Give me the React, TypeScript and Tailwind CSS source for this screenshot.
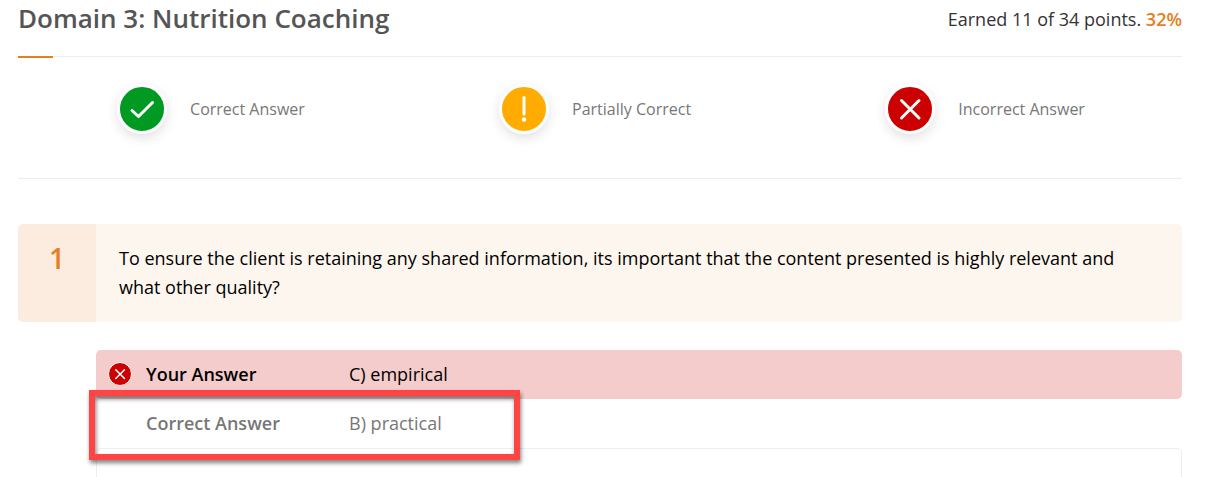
import React from "react";

type Status = "correct" | "partial" | "incorrect";

interface StatusIconProps {
  status: Status;
  small?: boolean;
}

const colors = {
  correct: "bg-[#009a22]",
  partial: "bg-[#ffab00]",
  incorrect: "bg-[#cc0000]",
};

const StatusIcon = ({ status, small }: StatusIconProps) => (
  <span
    className={`block shrink-0 rounded-full border-white ${colors[status]} ${
      small
        ? "size-6 border"
        : "size-[50px] border-3 shadow-[0_4px_12px_rgba(0,0,0,0.12)]"
    }`}
  >
    <svg
      viewBox="0 0 44 44"
      fill="none"
      stroke="white"
      strokeWidth={3}
      strokeLinecap="round"
      strokeLinejoin="round"
      className="size-full"
      aria-hidden="true"
    >
      {status === "correct" && <path d="M12 23.5l6.500 6L32.500 15.500" />}
      {status === "partial" && (
        <>
          <path d="M22 10.500V27" />
          <circle cx="22" cy="32.500" r="2.200" fill="white" stroke="none" />
        </>
      )}
      {status === "incorrect" && (
        <path d="M13.500 13.500l17.500 17.500M31 13.500L13.500 31" />
      )}
    </svg>
  </span>
);

const legend: { status: Status; label: string }[] = [
  { status: "correct", label: "Correct Answer" },
  { status: "partial", label: "Partially Correct" },
  { status: "incorrect", label: "Incorrect Answer" },
];

const App = () => {
  return (
    <main className="pl-[18px] pr-[42px] bg-white font-['Open_Sans','Noto_Sans',sans-serif] text-lg text-black">
      <header className="flex items-start justify-between h-[57px] border-b border-[#eeeeee]">
        <div className="flex flex-col">
          <h1 className="text-[26px] leading-9 font-semibold text-[#555555]">
            Domain 3: Nutrition Coaching
          </h1>
          <span className="mt-5 w-[35px] h-0.5 shrink-0 bg-[#e67e22]" />
        </div>
        <p className="leading-[38px] text-[#333333]">
          Earned 11 of 34 points.{" "}
          <span className="font-semibold text-[#e67e22]">32%</span>
        </p>
      </header>

      <ul className="flex justify-around pt-[27px] pb-11 pl-0.5 border-b border-[#eeeeee]">
        {legend.map(({ status, label }) => (
          <li key={status} className="flex items-center gap-[23px]">
            <StatusIcon status={status} />
            <span className="text-base text-[#777777]">{label}</span>
          </li>
        ))}
      </ul>

      <section className="mt-[45px]">
        <div className="flex rounded-[5px] overflow-hidden bg-[#fdf6ee]">
          <div className="w-[78px] shrink-0 pt-5 bg-[#fbecdf] text-center text-[28px] leading-7 font-semibold text-[#e67e22]">
            1
          </div>
          <h2 className="px-[23px] py-5 leading-[29px]">
            To ensure the client is retaining any shared information, its
            important that the content presented is highly relevant and what
            other quality?
          </h2>
        </div>

        <div className="relative mt-7 ml-[78px]">
          <table className="w-full text-left">
            <tbody>
              <tr className="h-[49px]">
                <th
                  scope="row"
                  className="w-[253px] pl-3 pb-0.5 rounded-l-[5px] bg-[#f4cccc] font-semibold"
                >
                  <div className="flex items-center gap-3.5">
                    <StatusIcon status="incorrect" small />
                    Your Answer
                  </div>
                </th>
                <td className="pb-0.5 rounded-r-[5px] bg-[#f4cccc]">
                  C) empirical
                </td>
              </tr>
              <tr className="h-[49px] text-[#777777]">
                <th scope="row" className="pl-[50px] pb-0.5 font-semibold">
                  Correct Answer
                </th>
                <td className="pb-0.5">B) practical</td>
              </tr>
            </tbody>
          </table>
          <div className="h-[29px] rounded-t-[5px] border border-b-0 border-[#eeeeee]" />
          {/* highlight around the correct answer */}
          <div className="absolute top-10 -left-[7px] w-[431px] h-[70px] border-6 border-[#ff4444] drop-shadow-[1px_3px_2px_rgba(0,0,0,0.5)]" />
        </div>
      </section>
    </main>
  );
};

export default App;
